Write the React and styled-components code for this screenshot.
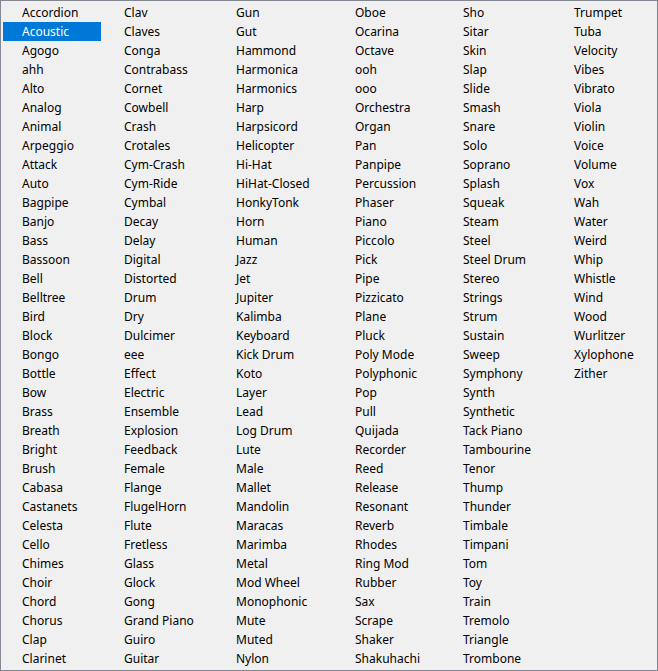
import React from "react";
import styled, { createGlobalStyle } from "styled-components";

const G = createGlobalStyle`
  html,body{margin:0;padding:0;background:#f0f0f0;}
`;
const items = `Accordion Acoustic Agogo ahh Alto Analog Animal Arpeggio Attack Auto Bagpipe Banjo Bass Bassoon Bell Belltree Bird Block Bongo Bottle Bow Brass Breath Bright Brush Cabasa Castanets Celesta Cello Chimes Choir Chord Chorus Clap Clarinet
Clav Claves Conga Contrabass Cornet Cowbell Crash Crotales Cym-Crash Cym-Ride Cymbal Decay Delay Digital Distorted Drum Dry Dulcimer eee Effect Electric Ensemble Explosion Feedback Female Flange FlugelHorn Flute Fretless Glass Glock Gong Grand_Piano Guiro Guitar
Gun Gut Hammond Harmonica Harmonics Harp Harpsicord Helicopter Hi-Hat HiHat-Closed HonkyTonk Horn Human Jazz Jet Jupiter Kalimba Keyboard Kick_Drum Koto Layer Lead Log_Drum Lute Male Mallet Mandolin Maracas Marimba Metal Mod_Wheel Monophonic Mute Muted Nylon
Oboe Ocarina Octave ooh ooo Orchestra Organ Pan Panpipe Percussion Phaser Piano Piccolo Pick Pipe Pizzicato Plane Pluck Poly_Mode Polyphonic Pop Pull Quijada Recorder Reed Release Resonant Reverb Rhodes Ring_Mod Rubber Sax Scrape Shaker Shakuhachi
Sho Sitar Skin Slap Slide Smash Snare Solo Soprano Splash Squeak Steam Steel Steel_Drum Stereo Strings Strum Sustain Sweep Symphony Synth Synthetic Tack_Piano Tambourine Tenor Thump Thunder Timbale Timpani Tom Toy Train Tremolo Triangle Trombone
Trumpet Tuba Velocity Vibes Vibrato Viola Violin Voice Volume Vox Wah Water Weird Whip Whistle Wind Wood Wurlitzer Xylophone Zither`
  .split("\n").map(l => l.split(" ").map(s => s.replace(/_/g, " ")));
const widths = [102, 112, 119, 108, 111, 100];

const Box = styled.div`
  width:658px;height:671px;box-sizing:border-box;border:1px solid #828790;
  background:#f0f0f0;padding:2px;display:flex;overflow:hidden;
  font-family:"Segoe UI","Noto Sans",sans-serif;font-size:12px;color:#000;
`;
const Col = styled.div`display:flex;flex-direction:column;flex:none;`;
const Item = styled.div`
  height:19px;line-height:19px;padding-left:19px;margin-right:4px;white-space:nowrap;
  background:${p => p.$sel ? "#0078d7" : "transparent"};
  color:${p => p.$sel ? "#fff" : "#000"};
`;

export default function App() {
  return (
    <>
      <G />
      <Box>
        {items.map((col, i) => (
          <Col key={i} style={{ width: widths[i] }}>
            {col.map(t => <Item key={t} $sel={t === "Acoustic"}>{t}</Item>)}
          </Col>
        ))}
      </Box>
    </>
  );
}
